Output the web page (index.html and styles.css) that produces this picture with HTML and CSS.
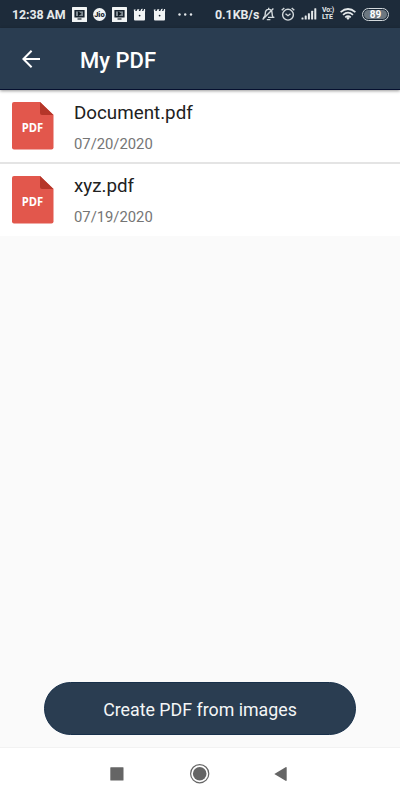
FILE: index.html
```html
<!DOCTYPE html>
<html lang="en">
<head>
    <meta charset="UTF-8">
    <meta name="viewport" content="width=device-width, initial-scale=1.0">
    <title>My PDF</title>
    <link rel="stylesheet" href="styles.css">
</head>
<body>
    <!-- shared icons -->
    <svg class="defs" width="0" height="0">
        <symbol id="tv" viewBox="0 0 15 15">
            <rect width="15" height="15" rx="0.5" fill="#f1f4f5"/>
            <rect x="2.4" y="3" width="10.2" height="7.4" rx="0.5" fill="#182430"/>
            <rect x="4" y="4.4" width="7" height="4.6" fill="#7d8890"/>
            <path d="M6 4.2v5l3.6-2.5z" fill="#0d1820"/>
            <path d="M5.5 12h4" stroke="#182430" stroke-width="1.2"/>
        </symbol>
        <symbol id="clap" viewBox="0 0 13 13">
            <path d="M1 3h11v8.5q0 1-1 1H2q-1 0-1-1z" fill="#f1f4f5"/>
            <path d="M0.8 1.5l2 0-.7 1.5 1.5 0 .8-1.8 2 0-.7 1.8h1.6l.9-2 1.6-.2-.8 2.2h1.4l.7-2 1 0V4H1z" fill="#f1f4f5"/>
            <circle cx="6.6" cy="7.6" r="0.9" fill="#182430"/>
        </symbol>
    </svg>

    <div class="status-bar">
        <div class="status-left">
            <span class="time">12:38 AM</span>
            <svg class="tv" width="15" height="15"><use href="#tv"/></svg>
            <svg class="jio" width="13" height="13" viewBox="0 0 13 13">
                <circle cx="6.5" cy="6.5" r="6.4" fill="#f1f4f5"/>
                <text x="6.4" y="9" text-anchor="middle" class="jio-label">Jio</text>
            </svg>
            <svg class="tv" width="15" height="15"><use href="#tv"/></svg>
            <svg class="clap" width="13" height="13"><use href="#clap"/></svg>
            <svg class="clap" width="13" height="13"><use href="#clap"/></svg>
            <svg class="dots" width="15" height="3" viewBox="0 0 15 3" fill="#e4e8ea">
                <circle cx="1.5" cy="1.5" r="1.2"/>
                <circle cx="7.2" cy="1.5" r="1.2"/>
                <circle cx="13" cy="1.5" r="1.2"/>
            </svg>
        </div>
        <div class="status-right">
            <span class="speed">0.1KB/s</span>
            <svg class="bell" width="15" height="14" viewBox="0 0 15 14" fill="none" stroke="#d3d9dc" stroke-width="1.4">
                <path d="M2 10.4h1.2q1.1-1.4 1.1-3.8 0-4.2 3.4-4.2t3.4 4.2q0 2.4 1.1 3.8h1.2H7M5.8 12.6h3.6M7.7 0.8v1.6"/>
                <path d="M1.6 12.4L12.4 1.4"/>
            </svg>
            <svg class="alarm" width="14" height="14" viewBox="0 0 14 14" fill="none" stroke="#d3d9dc" stroke-width="1.4">
                <circle cx="7" cy="7.7" r="5.4"/>
                <path d="M4.5 6.7L7 8.7l2.5-2M0.7 3.2l2.6-2.3M13.3 3.2l-2.6-2.3"/>
            </svg>
            <svg class="signal" width="16" height="12" viewBox="0 0 16 12" fill="#e4e8ea">
                <rect x="0.5" y="9.4" width="2" height="2" rx="0.5"/>
                <rect x="3.7" y="7.4" width="2" height="4" rx="0.5"/>
                <rect x="6.9" y="5.2" width="2" height="6.2" rx="0.5"/>
                <rect x="10.1" y="2.8" width="2" height="8.6" rx="0.5"/>
                <rect x="13.3" y="0.3" width="2" height="11.1" rx="0.5"/>
            </svg>
            <div class="volte"><span>Vo:)</span><span>LTE</span></div>
            <svg class="wifi" width="16" height="12" viewBox="0 0 16 12" fill="none" stroke="#e4e8ea" stroke-width="1.7">
                <path d="M0.6 4.2q7.4-6.4 14.8 0M3 6.9q5-4.4 10 0M5.2 9.3q2.8-2.3 5.6 0"/>
                <path d="M8 12L6.1 9.7q1.9-1.2 3.8 0z" fill="#e4e8ea" stroke="none"/>
            </svg>
            <span class="battery"><span class="level">89</span></span>
        </div>
    </div>

    <div class="header">
        <svg class="back" width="18" height="18" viewBox="0 0 18 18" fill="none" stroke="#fff" stroke-width="2">
            <path d="M18 9H1.5M9.6 0.8L1.4 9l8.2 8.2"/>
        </svg>
        <h1>My PDF</h1>
    </div>

    <div class="list">
        <div class="item">
            <svg class="file-icon" width="42" height="48" viewBox="0 0 42 48">
                <path d="M2 0h26l13.5 13v32.5q0 2-2 2H2q-2 0-2-2V2q0-2 2-2z" fill="#e2574c"/>
                <path d="M28 0l13.5 13H30q-2 0-2-2z" fill="#b53629"/>
                <text x="9.7" y="29.5" textLength="21.5" lengthAdjust="spacingAndGlyphs" class="pdf-label">PDF</text>
            </svg>
            <div class="info">
                <div class="name">Document.pdf</div>
                <div class="date">07/20/2020</div>
            </div>
        </div>
        <div class="item">
            <svg class="file-icon" width="42" height="48" viewBox="0 0 42 48">
                <path d="M2 0h26l13.5 13v32.5q0 2-2 2H2q-2 0-2-2V2q0-2 2-2z" fill="#e2574c"/>
                <path d="M28 0l13.5 13H30q-2 0-2-2z" fill="#b53629"/>
                <text x="9.7" y="29.5" textLength="21.5" lengthAdjust="spacingAndGlyphs" class="pdf-label">PDF</text>
            </svg>
            <div class="info">
                <div class="name">xyz.pdf</div>
                <div class="date">07/19/2020</div>
            </div>
        </div>
    </div>

    <div class="footer">
        <button class="btn">Create PDF from images</button>
    </div>

    <div class="nav">
        <svg width="14" height="14" viewBox="0 0 14 14"><rect x="0.3" y="0.3" width="13.2" height="13.2" rx="0.5" fill="#656565"/></svg>
        <svg width="20" height="20" viewBox="0 0 20 20">
            <circle cx="9.7" cy="9.7" r="9.1" fill="none" stroke="#656565" stroke-width="1.2"/>
            <circle cx="9.7" cy="9.7" r="6.8" fill="#656565"/>
        </svg>
        <svg width="13" height="15" viewBox="0 0 13 15"><path d="M0.3 7L12 0.1q.7 0 .7.6v12.6q0 .6-.7.6z" fill="#656565"/></svg>
    </div>
</body>
</html>
```
FILE: styles.css
```css
* { box-sizing: border-box; }
body { background-color: #fafafa; font-family: Roboto, 'Liberation Sans', sans-serif; margin: 0; height: 100vh; min-height: 800px; display: flex; flex-direction: column; }
svg { display: block; flex: none; }
.defs { position: absolute; }

.status-bar { height: 28px; background-color: #1d2b3a; color: #e6eaec; display: flex; justify-content: space-between; align-items: center; padding: 0 11px 0 12px; }
.status-left, .status-right { display: flex; align-items: center; }
.time { width: 54px; margin-right: 6px; font-size: 12.4px; font-weight: bold; white-space: nowrap; letter-spacing: -0.1px; }
.jio { margin: 0 6px; }
.jio-label { font-size: 7.5px; font-weight: 900; fill: #182430; }
.clap { margin-left: 6px; }
.clap + .clap { margin-left: 7px; }
.dots { margin-left: 12px; }
.speed { width: 44px; font-size: 12.4px; font-weight: bold; white-space: nowrap; letter-spacing: -0.05px; }
.bell { margin-left: 2px; }
.alarm { margin-left: 5px; }
.signal { margin-left: 6px; }
.volte { width: 13px; margin-left: 5px; display: flex; flex-direction: column; font-size: 7px; line-height: 7px; font-weight: bold; white-space: nowrap; letter-spacing: -0.2px; }
.wifi { margin-left: 5px; }
.battery { width: 27px; height: 13px; margin-left: 6px; border: 1.5px solid #d3d9dc; border-radius: 7px; padding: 1px; display: flex; }
.level { flex: 1; border-radius: 5px; background-color: #6c7780; font-size: 10px; line-height: 9px; font-weight: bold; text-align: center; color: #fff; }

.header { height: 62px; background-color: #2a3d51; color: #fff; display: flex; align-items: center; padding: 0 22px; border-bottom: 1px solid #06102f; box-shadow: 0 1px 3px rgba(0, 0, 0, 0.4); z-index: 1; }
.header h1 { margin: 4px 0 0 40px; font-size: 22px; font-weight: 500; line-height: 26px; }

.list { background-color: #fff; }
.item { height: 72px; display: flex; padding: 12px 12px 0 12px; }
.item + .item { height: 74px; padding-top: 11.5px; border-top: 2px solid #e4e4e4; }
.item + .item .info { margin-top: -0.5px; }
.info { margin-left: 20px; }
.name { font-size: 18.8px; line-height: 22px; color: #212121; }
.date { margin-top: 11px; font-size: 14.8px; line-height: 18px; color: #757575; }
.pdf-label { font-family: 'Open Sans', sans-serif; font-size: 11.5px; font-weight: bold; fill: #fff; }

.footer { margin-top: auto; padding: 0 44px 12px; }
.btn { display: block; width: 312px; height: 53px; padding: 2px 0 0; border: 1px solid #18304a; border-radius: 27px; background-color: #2a3d51; color: #f4f6f7; font-family: inherit; font-size: 17.8px; cursor: pointer; }

.nav { height: 53px; background-color: #fff; border-top: 1px solid #f2f2f2; display: flex; align-items: center; padding-left: 110px; gap: 66px; }
.nav svg:last-child { margin-left: -2px; }
```
